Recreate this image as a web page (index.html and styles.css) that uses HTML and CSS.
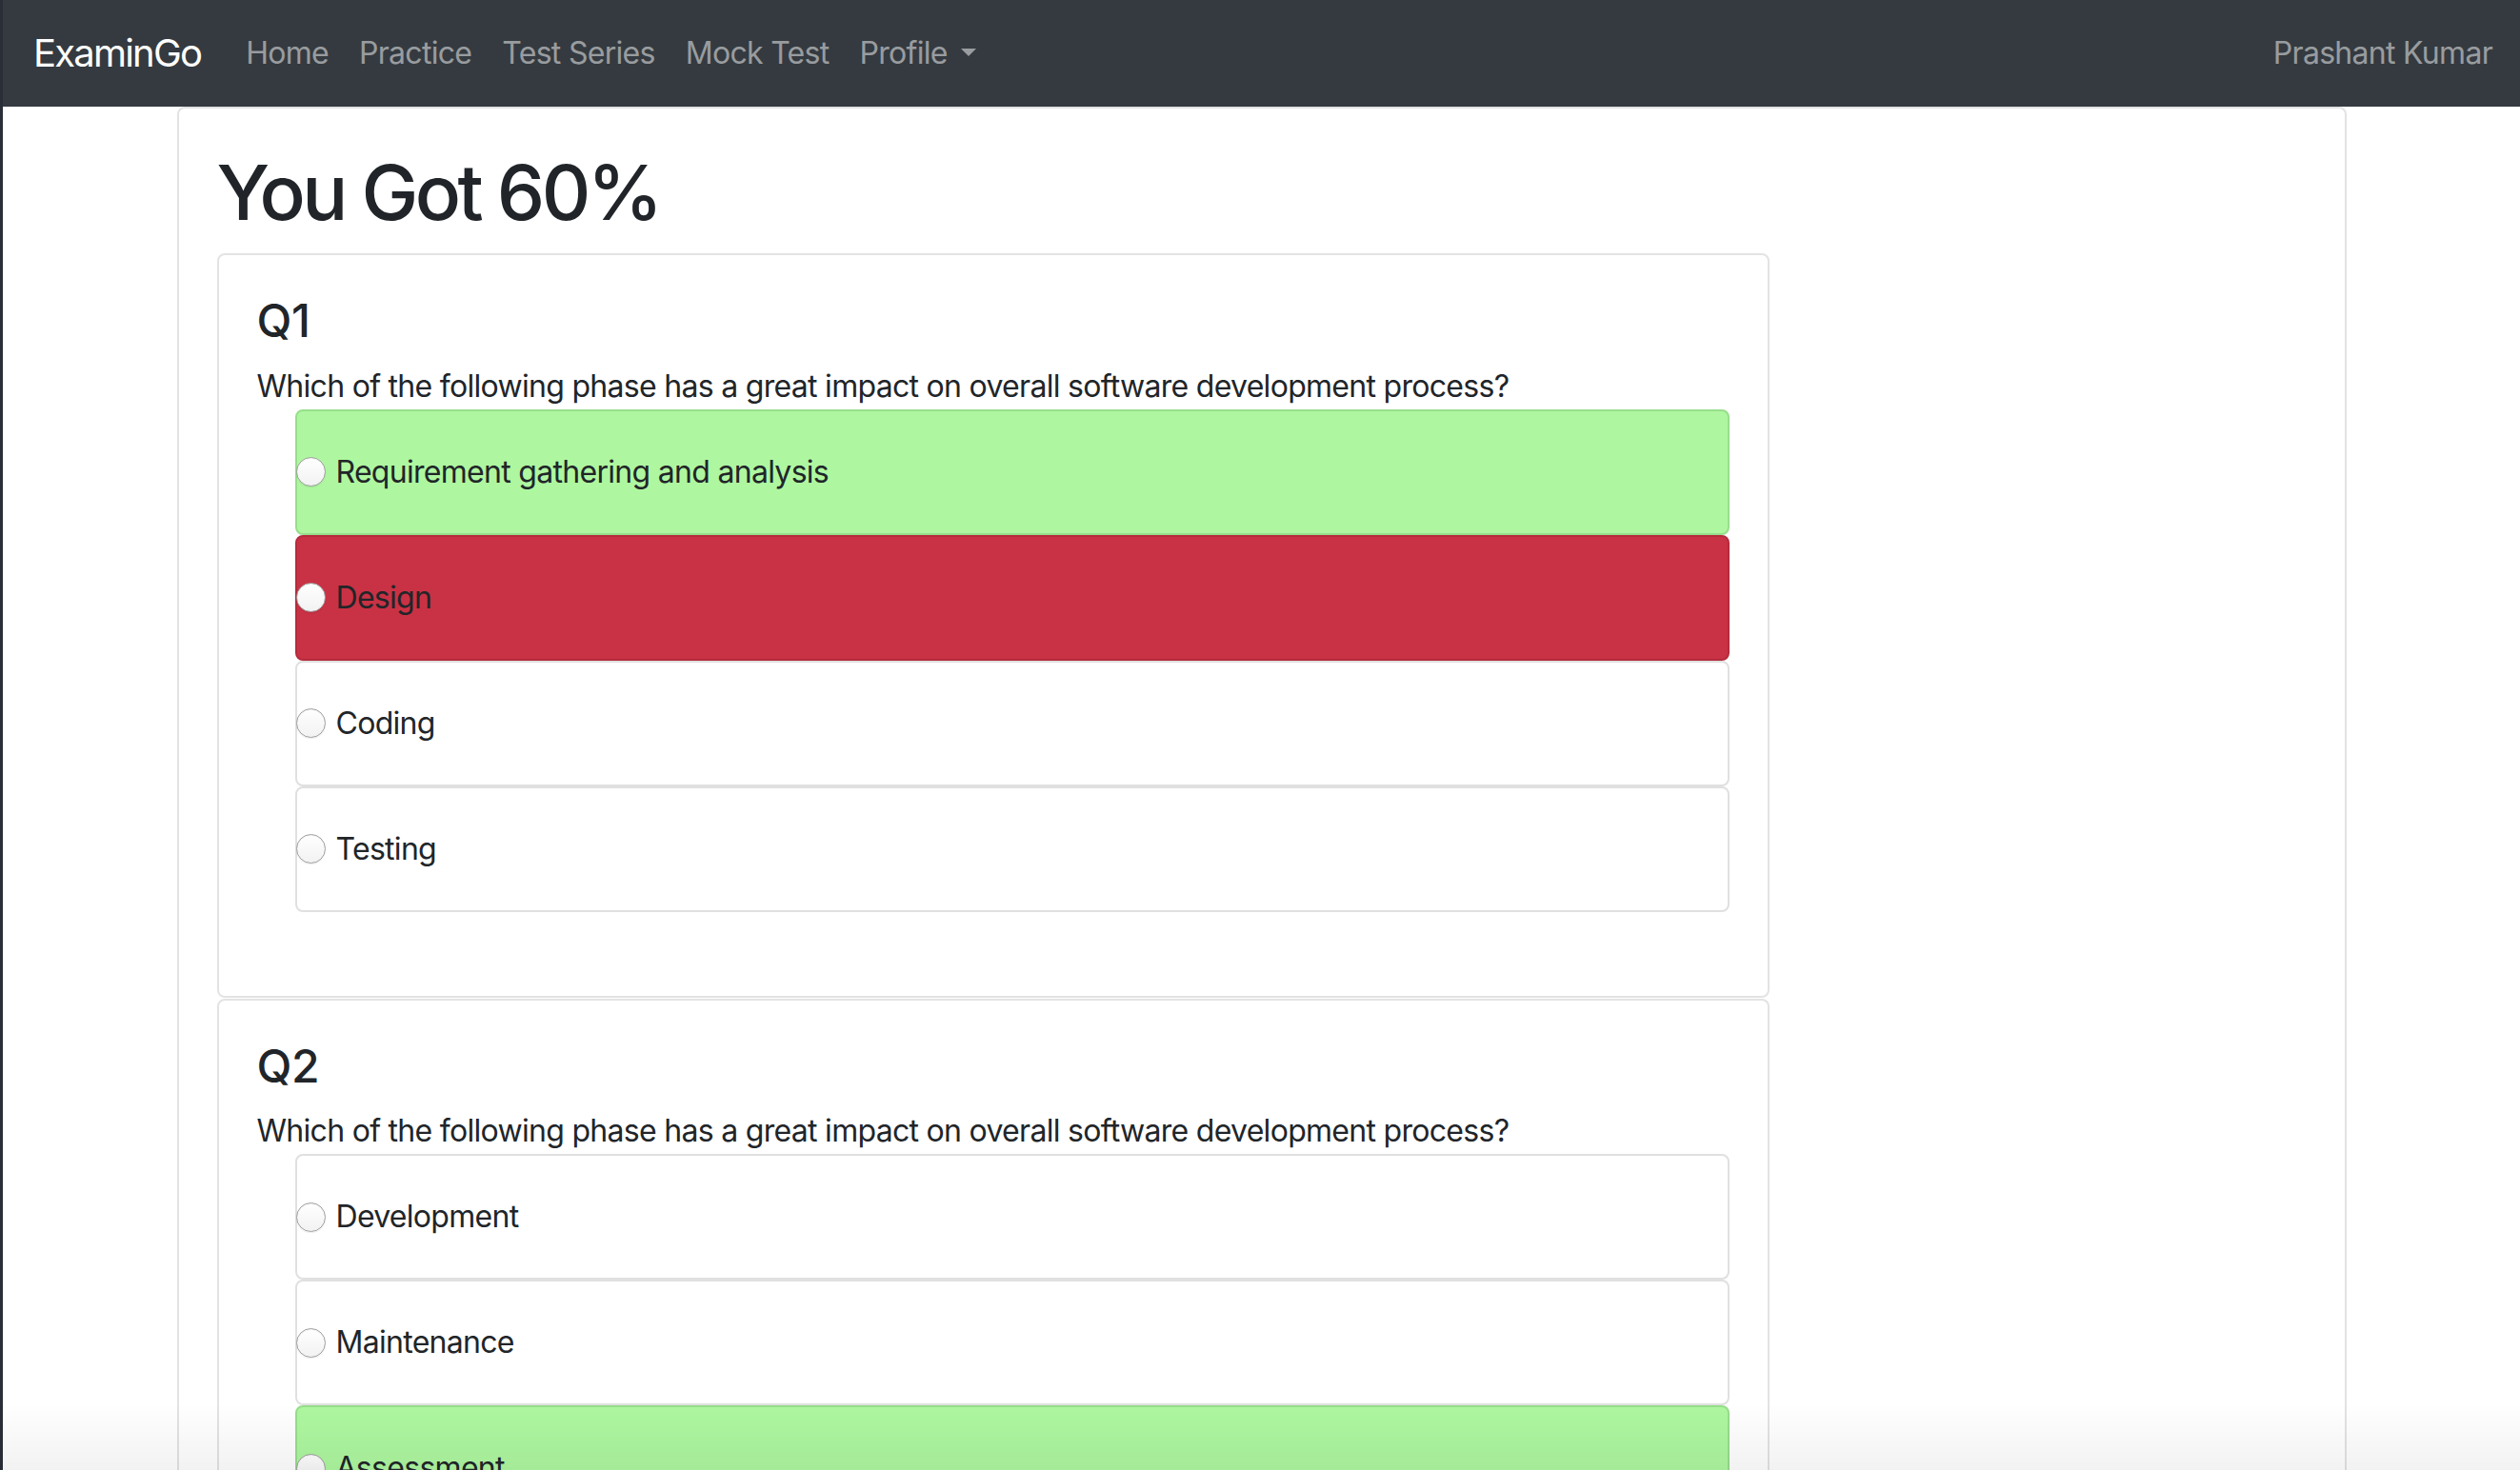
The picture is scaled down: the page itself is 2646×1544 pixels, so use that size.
FILE: index.html
```html
<!DOCTYPE html>
<html lang="en">
<head>
<meta charset="utf-8">
<title>ExaminGo - Result</title>
<link rel="stylesheet" href="styles.css">
</head>
<body>
<nav class="navbar">
  <a class="brand" href="#">ExaminGo</a>
  <ul class="nav">
    <li><a class="nav-link" href="#">Home</a></li>
    <li><a class="nav-link" href="#">Practice</a></li>
    <li><a class="nav-link" href="#">Test Series</a></li>
    <li><a class="nav-link" href="#">Mock Test</a></li>
    <li><a class="nav-link" href="#">Profile<span class="caret"></span></a></li>
  </ul>
  <span class="user">Prashant Kumar</span>
</nav>

<main class="page">
  <h1 class="score">You Got 60%</h1>
  <div class="row">
    <div class="col-main">
      <section class="qcard">
        <h4 class="qtitle">Q1</h4>
        <p class="question">Which of the following phase has a great impact on overall software development process?</p>
        <div class="options">
          <label class="option correct"><input type="radio" name="q1" class="radio"><span>Requirement gathering and analysis</span></label>
          <label class="option wrong"><input type="radio" name="q1" class="radio"><span>Design</span></label>
          <label class="option"><input type="radio" name="q1" class="radio"><span>Coding</span></label>
          <label class="option"><input type="radio" name="q1" class="radio"><span>Testing</span></label>
        </div>
      </section>
      <section class="qcard">
        <h4 class="qtitle">Q2</h4>
        <p class="question">Which of the following phase has a great impact on overall software development process?</p>
        <div class="options">
          <label class="option"><input type="radio" name="q2" class="radio"><span>Development</span></label>
          <label class="option"><input type="radio" name="q2" class="radio"><span>Maintenance</span></label>
          <label class="option correct"><input type="radio" name="q2" class="radio"><span>Assessment</span></label>
        </div>
      </section>
    </div>
    <div class="col-side"></div>
  </div>
</main>
<div class="bottom-fade"></div>
</body>
</html>
```
FILE: styles.css
```css
html, body {
  margin: 0;
  padding: 0;
}
body {
  border-left: 3px solid #2a2e36;
  background: #ffffff;
  color: #212529;
  font-family: Inter, "Noto Sans", "Liberation Sans", sans-serif;
  font-size: 32px;
  line-height: 1.5;
  letter-spacing: -0.022em;
}

/* navbar */
.navbar {
  display: flex;
  align-items: center;
  box-sizing: border-box;
  height: 112px;
  padding: 16px 29px 16px 32px;
  background: #343a40;
}
.brand {
  font-size: 40px;
  line-height: 60px;
  color: #ffffff;
  text-decoration: none;
  margin-right: 31px;
  letter-spacing: -0.045em;
}
.nav {
  display: flex;
  list-style: none;
  margin: 0;
  padding: 0;
}
.nav-link {
  display: block;
  padding: 16px;
  font-size: 32px;
  line-height: 48px;
  color: rgba(255, 255, 255, 0.5);
  text-decoration: none;
}
.caret {
  display: inline-block;
  margin-left: 0.45em;
  vertical-align: 0.255em;
  border-top: 0.27em solid;
  border-right: 0.27em solid transparent;
  border-left: 0.27em solid transparent;
}
.user {
  margin-left: auto;
  font-size: 32px;
  line-height: 48px;
  color: rgba(255, 255, 255, 0.5);
}

/* page */
.page {
  display: block;
  box-sizing: border-box;
  width: 2278px;
  margin: 0 auto;
  padding: 40px;
  border: 2px solid #e3e3e3;
  border-radius: 8px;
}
.score {
  margin: 0 0 16px;
  font-size: 80px;
  font-weight: 500;
  line-height: 1.2;
  letter-spacing: -0.045em;
}
.row {
  display: flex;
  margin: 0 -30px;
}
.col-main {
  flex: 0 0 75%;
  box-sizing: border-box;
  padding: 0 30px;
}
.col-side {
  flex: 0 0 25%;
}

.qcard {
  border: 2px solid #e3e3e3;
  border-radius: 8px;
  padding: 40px;
}
.qcard + .qcard {
  margin-top: 1px;
}
.qtitle {
  margin: 0 0 16px;
  font-size: 48px;
  font-weight: 500;
  line-height: 1.2;
  letter-spacing: -0.01em;
}
.question {
  margin: 0;
  font-size: 32px;
  line-height: 48px;
}
.options {
  margin: 0 0 48px 40px;
}
.option {
  display: flex;
  align-items: center;
  gap: 11px;
  padding: 40px 0;
  border: 2px solid #e0e0e0;
  border-radius: 8px;
  background: #ffffff;
  font-size: 32px;
  line-height: 48px;
}
.option.correct {
  background: #aef7a0;
  border-color: #97de8b;
}
.option.wrong {
  background: #c93244;
  border-color: #b52a3b;
}
.radio {
  appearance: none;
  -webkit-appearance: none;
  flex: 0 0 auto;
  width: 31px;
  height: 31px;
  margin: 0 0 0 -1px;
  border: 1px solid #a0a0a0;
  border-radius: 50%;
  background: linear-gradient(#ffffff, #f2f2f2);
  box-shadow: inset 0 1px 1px rgba(0, 0, 0, 0.06), 0 1px 1px rgba(0, 0, 0, 0.08);
}

.bottom-fade {
  position: fixed;
  left: 0;
  right: 0;
  bottom: 0;
  height: 70px;
  background: linear-gradient(rgba(0, 0, 0, 0), rgba(0, 0, 0, 0.05));
  pointer-events: none;
}
```
